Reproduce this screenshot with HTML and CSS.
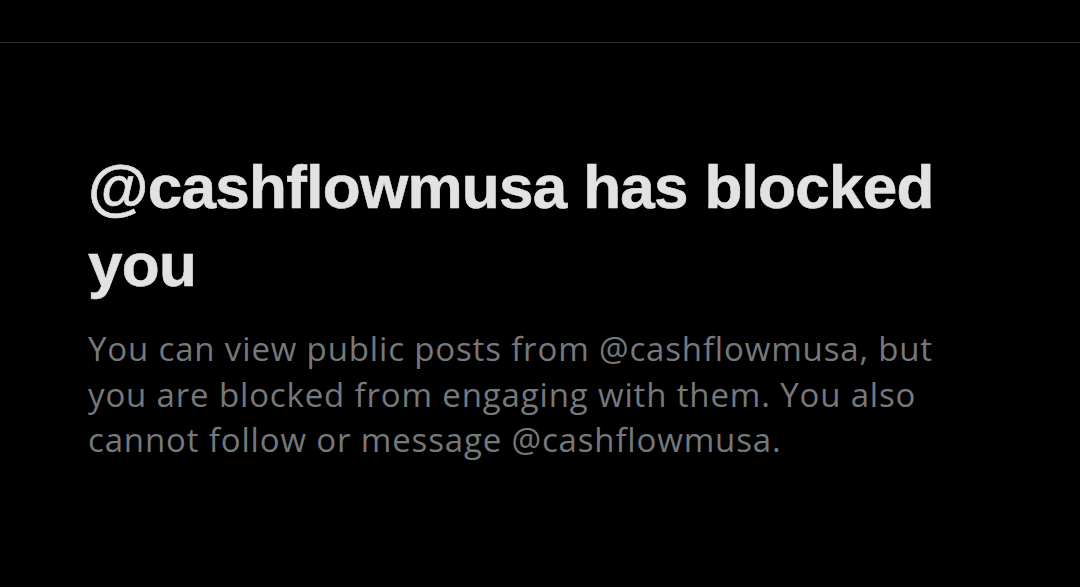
FILE: index.html
```html
<!DOCTYPE html>
<html>
<head>
<meta charset="utf-8">
<link rel="stylesheet" href="styles.css">
</head>
<body>
<div class="topbar"></div>
<main class="content">
  <h1 class="title">@cashflowmusa has blocked you</h1>
  <p class="desc">You can view public posts from @cashflowmusa, but you are blocked from engaging with them. You also cannot follow or message @cashflowmusa.</p>
</main>
</body>
</html>
```
FILE: styles.css
```css
html, body {
  margin: 0;
  padding: 0;
  background: #000;
  height: 100%;
}
body {
  overflow: hidden;
}
.topbar {
  height: 42px;
  border-bottom: 1px solid #2f3336;
}
.content {
  padding: 105px 88px 0 88px;
  width: 860px;
}
.title {
  margin: 0;
  font-family: "Liberation Sans", Arial, sans-serif;
  font-weight: 700;
  font-size: 62px;
  line-height: 78px;
  color: #e2e2e2;
  letter-spacing: -0.7px;
  -webkit-text-stroke: 0.6px #e2e2e2;
}
.desc {
  margin: 22px 0 0 0;
  font-family: "Open Sans", sans-serif;
  font-size: 33px;
  line-height: 45.5px;
  letter-spacing: 0.85px;
  color: #75787c;
}
```
